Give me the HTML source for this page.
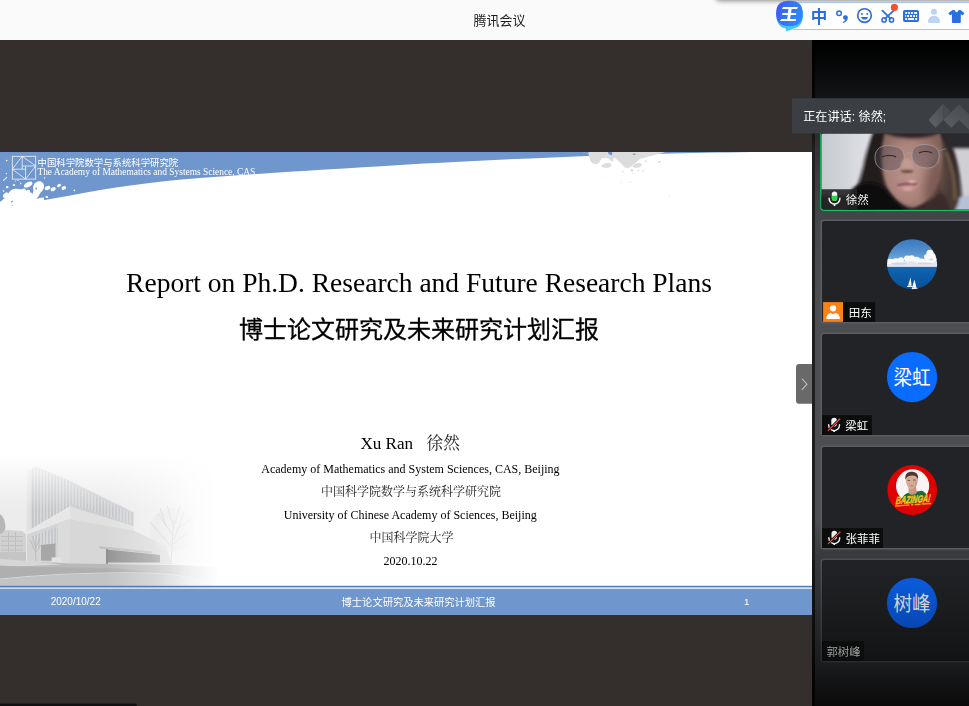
<!DOCTYPE html>
<html lang="zh"><head><meta charset="utf-8"><title>腾讯会议</title>
<style>
html,body{margin:0;padding:0}
html{overflow:hidden;width:969px;height:706px;background:#342f2d}
body{width:969px;height:706px;overflow:hidden;position:relative;background:#342f2d;font-family:"Liberation Sans",sans-serif}
.a{position:absolute}

</style></head><body>

<div class="a" id="titlebar" style="left:0;top:0;width:969px;height:40px;background:#fafafa;overflow:hidden">
  <div class="a" style="left:716px;top:-12px;width:262px;height:12px;border-radius:4px;box-shadow:0 0 5px 1px rgba(0,0,0,.45)"></div>
</div>
<div class="a" id="ime" style="left:790px;top:2px;width:184px;height:26px;background:#fff;border:1px solid #a9c4ef;border-radius:4px;box-sizing:content-box"></div>
<svg class="a" style="left:770px;top:0" width="199" height="40" viewBox="770 0 199 40">
  <defs>
    <linearGradient id="bub" x1="0" y1="0.3" x2="1" y2="0.7"><stop offset="0" stop-color="#3f58f6"/><stop offset=".35" stop-color="#3670f8"/><stop offset="1" stop-color="#2f88fb"/></linearGradient>
  </defs>
  <!-- sogou style bubble -->
  <path d="M776.5 15.3C776.5 6.05 780.72 1.7 789.7 1.7C798.68 1.7 802.9 6.05 802.9 15.3C802.9 24.55 798.68 28.9 789.7 28.9C780.72 28.9 776.5 24.55 776.5 15.3Z" fill="#40c6fb"/>
  <path d="M784.6 26.6 C785.8 28 786.2 29.6 785.9 30.9 C788.6 30.7 791.2 29.9 793.2 28.4Z" fill="#40c6fb"/>
  <path d="M776.1 13.45C776.1 4.76 780.22 0.85 789.4 0.85C798.58 0.85 802.7 4.76 802.7 13.45C802.7 22.14 798.58 26.05 789.4 26.05C780.22 26.05 776.1 22.14 776.1 13.45Z" fill="url(#bub)"/>
  <!-- 王 glyph -->
  <g fill="#fff"><path d="M783.1 7.1 H798 L797 9.05 H781.9Z"/><path d="M782.6 13 H796.1 V14.9 H781.9Z"/><path d="M781.4 19 H796.1 L795.6 20.9 H779.9Z"/><path d="M788.4 8.5 H791.7 L790 19.6 H787.2Z"/></g>
  <!-- punctuation -->
  <circle cx="839.1" cy="13.2" r="2.3" fill="none" stroke="#2a6fe0" stroke-width="1.5"/>
  <path d="M842.9 17.7 a2.45 2.45 0 1 1 4.85 .55 c-.2 2.3 -1.9 4 -4.6 4.7 l-.55 -1 c1.5 -.55 2.4 -1.3 2.65 -2.3 a2.45 2.45 0 0 1 -2.35 -1.95z" fill="#2a6fe0"/>
  <!-- smiley -->
  <circle cx="864.5" cy="15.5" r="6.8" fill="none" stroke="#2a6fe0" stroke-width="1.65"/>
  <circle cx="861.9" cy="14" r="0.95" fill="#2a6fe0"/><circle cx="867.2" cy="14" r="0.95" fill="#2a6fe0"/>
  <path d="M860.9 16.9 h7.3 c-.5 1.7 -1.9 2.6 -3.65 2.6 s-3.15 -.9 -3.65 -2.6z" fill="#2a6fe0"/>
  <!-- scissors -->
  <g fill="none" stroke="#2a6fe0" stroke-linecap="round"><path d="M882.3 10.6 L890.6 18.6 M893.4 10.9 L885 18.6" stroke-width="1.8"/><circle cx="884.1" cy="19.9" r="2.1" stroke-width="1.6"/><circle cx="891.5" cy="19.9" r="2.1" stroke-width="1.6"/></g>
  <circle cx="894.4" cy="7.4" r="3.55" fill="#f4502f"/>
  <!-- keyboard -->
  <rect x="903" y="9.95" width="16.05" height="12.05" rx="1.9" fill="#2a6fe0"/>
  <g fill="#fff"><rect x="905.2" y="12.05" width="1.9" height="1.9"/><rect x="908.1" y="12.05" width="1.85" height="1.9"/><rect x="911" y="12.05" width="1.9" height="1.9"/><rect x="914.1" y="12.05" width="3" height="1.9"/>
  <rect x="905.2" y="15" width="0.95" height="1.95"/><rect x="907.1" y="15" width="1.9" height="1.95"/><rect x="910" y="15" width="1.95" height="1.95"/><rect x="913.1" y="15" width="1.9" height="1.95"/><rect x="916" y="15" width="1.1" height="1.95"/>
  <rect x="905.2" y="18.1" width="1.9" height="1.9"/><rect x="908.1" y="18.1" width="6" height="1.9"/><rect x="915.2" y="18.1" width="1.9" height="1.9"/></g>
  <!-- person (light) -->
  <circle cx="933.95" cy="11.85" r="3.05" fill="#bdd4f5"/><path d="M928 21.9 c0 -3.9 2.6 -5.9 6 -5.9 s6.05 2 6.05 5.9 a1 1 0 0 1 -1 1 h-10.05 a1 1 0 0 1 -1 -1z" fill="#bdd4f5"/>
  <!-- t-shirt -->
  <path d="M952.6 9.95 h2.1 c.3 1.4 1 2.2 1.9 2.2 s1.6 -.8 1.9 -2.2 h2.1 l3.3 2.7 a.7 .7 0 0 1 .1 1 l-1 1.3 a.7 .7 0 0 1 -.9 .15 l-1.3 -.8 v7.6 a1 1 0 0 1 -1 1 h-6.9 a1 1 0 0 1 -1 -1 v-7.6 l-1.3 .8 a.7 .7 0 0 1 -.9 -.15 l-1 -1.3 a.7 .7 0 0 1 .1 -1z" fill="#2a6fe0"/>
</svg>


<div class="a" id="slide" style="left:0;top:152px;width:812px;height:462.8px;background:#fff;overflow:hidden">
<svg class="a" style="left:0;top:0" width="812" height="463" viewBox="0 152 812 463">
  <defs>
    <linearGradient id="fadeR" x1="0" y1="0" x2="1" y2="0"><stop offset="0" stop-color="#fff"/><stop offset=".62" stop-color="#fff"/><stop offset=".8" stop-color="#fff" stop-opacity=".55"/><stop offset="1" stop-color="#fff" stop-opacity="0"/></linearGradient>
    <linearGradient id="fadeT" x1="0" y1="0" x2="0" y2="1"><stop offset="0" stop-color="#000"/><stop offset=".22" stop-color="#222"/><stop offset=".5" stop-color="#bbb"/><stop offset=".75" stop-color="#fff"/><stop offset="1" stop-color="#fff"/></linearGradient>
    <radialGradient id="fadeRad" gradientUnits="userSpaceOnUse" cx="0" cy="0" r="1" gradientTransform="translate(30 600) scale(215 150)"><stop offset="0" stop-color="#fff"/><stop offset=".5" stop-color="#fff"/><stop offset=".68" stop-color="#aaa"/><stop offset=".85" stop-color="#333"/><stop offset="1" stop-color="#000"/></radialGradient>
    <mask id="photoMask" maskUnits="userSpaceOnUse" x="0" y="440" width="260" height="150">
      <rect x="0" y="440" width="260" height="150" fill="url(#fadeRad)"/>
    </mask>
    <linearGradient id="fadeTop" x1="0" y1="0" x2="0" y2="1"><stop offset="0" stop-color="#fff"/><stop offset=".2" stop-color="#fff"/><stop offset=".5" stop-color="#fff" stop-opacity=".6"/><stop offset="1" stop-color="#fff" stop-opacity="0"/></linearGradient>
    <linearGradient id="fadeRight" x1="0" y1="0" x2="1" y2="0"><stop offset="0" stop-color="#fff" stop-opacity="0"/><stop offset=".3" stop-color="#fff" stop-opacity=".35"/><stop offset=".52" stop-color="#fff" stop-opacity=".8"/><stop offset=".69" stop-color="#fff"/><stop offset="1" stop-color="#fff"/></linearGradient>
    <filter id="b1" x="-5%" y="-5%" width="110%" height="110%"><feGaussianBlur stdDeviation="0.7"/></filter>
    <filter id="b3" x="-20%" y="-20%" width="140%" height="140%"><feGaussianBlur stdDeviation="2.5"/></filter>
    <pattern id="stripes" width="3.2" height="10" patternUnits="userSpaceOnUse"><rect width="3.2" height="10" fill="#d6d7d9"/><rect width="1.5" height="10" fill="#bfc1c4"/></pattern>
  </defs>

  <!-- building photo (greyscale, fading out) -->
  <g filter="url(#b1)">
    <rect x="0" y="440" width="260" height="150" fill="#ebebeb"/>
    <!-- distant left buildings + tree -->
    <path d="M0 531 L8 530 L22 531 L26 534 V560 H0Z" fill="#d0d0d0"/>
    <g fill="#bdbdbd"><rect x="1" y="536" width="22" height="1.1"/><rect x="1" y="540.5" width="22" height="1.1"/><rect x="1" y="545" width="22" height="1.1"/><rect x="1" y="549.5" width="22" height="1.1"/><rect x="8" y="532" width="1" height="24"/><rect x="15" y="532" width="1" height="24"/></g>
    <path d="M0 514 C3 516 5 520 5.4 526 C5.6 530 4 533 0 534Z" fill="#b4b4b4"/>
    <path d="M0 552 H26 V561 H0Z" fill="#c2c2c2"/>
    <!-- upper glass volume: left face, right face -->
    <path d="M28.4 470 L36.4 466.4 L69.8 480.8 L69.8 506.6 L26.8 531.5Z" fill="url(#stripes)"/>
    <path d="M26.8 470 L30.6 468.6 L30.6 529.4 L26.8 531.5Z" fill="#e0e0e1"/>
    <path d="M69.8 480.8 L133.9 512.4 L133.9 526.7 L69.8 506.6Z" fill="#cbccce"/>
    <path d="M69.8 484 L133.9 514.4 L133.9 525 L69.8 503Z" fill="url(#stripes)" opacity=".9"/>
    <!-- white band under glass -->
    <path d="M26.8 531.5 L69.8 506.6 L69.8 519 L26.8 534.6Z" fill="#e6e6e6"/>
    <path d="M69.8 506.6 L133.9 526.7 L133.9 530.5 L69.8 519Z" fill="#dfdfdf"/>
    <!-- lower volume right face -->
    <path d="M69.8 519 L133.9 530.5 L166 546 L172 564 L69.8 564Z" fill="#d5d5d5"/>
    <!-- lower left face with windows -->
    <path d="M26.8 534.6 L69.8 519 L69.8 564 L26.8 561Z" fill="#d2d2d2"/>
    <path d="M32.5 536 L58 526.6 L58 545 L32.5 549Z" fill="url(#stripes)"/>
    <path d="M41 545 L55.5 543.6 L55.5 561 L41 560.4Z" fill="#a3a3a3"/>
    <path d="M58 523 L69.8 519 L69.8 564 L58 563.4Z" fill="#dadada"/>
    <!-- small tree near corner -->
    <g stroke="#b2b2b2" stroke-width="0.7" fill="none"><path d="M36 561 L35 545 M35 551 L30 540 M35.4 549 L40 538 M35 546 L33 536 M35.2 553 L41 545"/></g>
    <!-- entrance canopy + dark doorway -->
    <path d="M99.4 546.2 L152 551.6 L152 553.4 L99.4 548.4Z" fill="#bcbcbc"/>
    <path d="M106 549.6 L142 553 L160 555 L160 562.6 L106 562.6Z" fill="#8e8e8e"/>
    <rect x="106.2" y="549" width="1.7" height="26" fill="#888"/>
    <rect x="51.6" y="557.4" width="9.6" height="4.4" fill="#e2e2e2"/>
    <!-- ground / road -->
    <path d="M0 560 L70 563.4 L180 565 L260 570 L260 590 L0 590Z" fill="#b6b6b6"/>
    <path d="M0 559 L30 561 L62 564.4 L20 566.6 L0 565.4Z" fill="#d4d4d4"/>
    <path d="M0 566 L120 568.6 L200 578 L200 590 L0 590Z" fill="#ababab"/>
    <path d="M0 579.6 C50 574.6 100 572.6 150 573.6 C170 574.4 190 578 205 582 L205 590 L0 590Z" fill="#c0c0c0"/>
    <path d="M0 579 C50 574 100 572 150 573 C170 573.8 190 577 205 581" stroke="#d6d6d6" stroke-width="1.2" fill="none"/>
    <!-- tree on right -->
    <ellipse cx="172" cy="530" rx="22" ry="22" fill="#dcdcdc" opacity=".55"/>
    <g stroke="#bfbfbf" stroke-width="0.8" fill="none"><path d="M171 562 L174 520 M174 540 L184 512 M173.4 536 L158 514 M174 528 L167 506 M176 530 L191 519 M172.6 548 L150 522 M175 524 L180 505 M173 544 L188 532 M166 526 L160 508"/></g>
  </g>
  <!-- fade-outs -->
  <rect x="0" y="440" width="270" height="70" fill="url(#fadeTop)"/>
  <rect x="105" y="440" width="165" height="150" fill="url(#fadeRight)"/>
  <rect x="0" y="440" width="270" height="150" fill="#fff" opacity=".05"/>

  <!-- header blue band with curved lower edge -->
  <path d="M0 152 H812 V152 H766 C700 152.6 640 154 600 155.4 C520 158.6 450 162 400 165 C330 169.2 260 173.6 200 178 C150 182 110 188 78 194 C50 199.5 25 203.5 0 207Z" fill="#7097cd"/>
  <!-- grey splatter (top middle) -->
  <g fill="#dcdcdc">
    <path d="M583 152 H665.4 C657 154.4 648 156.6 640 159 C637 161.4 634 164.6 630.4 167 C627.6 168.8 624.6 168 623 165.6 C620.6 162.6 618 160.4 615.4 158.4 C613.6 157 612.6 159 613.6 161 C612 162 610.4 160.8 609.4 159 C607 157.6 604 157.6 601.6 158.6 C600.4 160.6 599.4 163.4 596.4 164.2 C593 164.8 590.6 162.6 589.8 159.6 C589 157 588.8 155 588.6 153.4 C587 153.6 584.6 153 583 152Z"/>
    <path d="M601.6 165.6 C602.6 163.6 606 162.8 608.6 163 C610.8 163.2 611.8 164.6 611.2 166 C610.4 167.6 607.6 168 605 167.8 C603 167.8 601.2 167 601.6 165.6Z"/>
    <path d="M632.4 166.6 C633.6 164 637.6 162.8 640.4 163.2 C642.6 163.6 642.2 165.6 640.2 166.8 C638 168.2 634.6 168.6 632.4 166.6Z"/>
    <ellipse cx="645.8" cy="161.2" rx="1.4" ry="0.6"/><ellipse cx="659.4" cy="162" rx="1.5" ry="1"/>
    <ellipse cx="632" cy="170.4" rx="1.3" ry="1.3"/><ellipse cx="638.4" cy="170.4" rx="1" ry="0.7"/><ellipse cx="643" cy="171" rx="0.7" ry="0.7"/><ellipse cx="623" cy="171.6" rx="1" ry="0.7"/><ellipse cx="633" cy="173.2" rx="1.6" ry="0.4"/>
    <ellipse cx="603" cy="176" rx="1" ry="0.6" opacity=".5"/><ellipse cx="621" cy="182.6" rx="1" ry="0.6" opacity=".5"/><ellipse cx="630" cy="182" rx="3" ry="0.4" opacity=".4" transform="rotate(-15 630 182)"/><ellipse cx="669.6" cy="196" rx="1.2" ry="0.6" opacity=".6"/><ellipse cx="584" cy="164.6" rx="0.8" ry="0.6" opacity=".4"/>
  </g>
  <g fill="#7097cd"><path d="M607.8 152 H612.2 V155 C610.6 155.6 608.6 154.6 607.8 152Z"/><ellipse cx="634.2" cy="154.2" rx="1.6" ry="0.6"/><path d="M583 152 H589 C588 153.6 585.4 153.4 583 152Z"/></g>
  <!-- white splatter (top left) -->
  <g fill="#fff">
    <path d="M0 202 C3 200 6 197 8.5 193 C10 190.4 12.5 189 15 188.8 C17.5 188.4 19.5 189.6 21.5 189.2 C23.5 188.6 25.4 189.6 26.6 190.8 C28 192 29.6 192 31 192.6 C32.4 193.4 33 195 33.6 196.4 C34.4 198 36 199 38 198.6 C40 198.2 42 197.6 44 197.6 L44 201 L0 208Z"/>
    <path d="M33.4 190 C32.4 186 34.2 182.4 37.8 181.4 C41.6 180.6 44.4 183.4 44 187 C43.6 190 41.8 191.4 40.4 192.8 C39.2 194.8 38.2 197.6 36 199.4 C33 199 31.6 196 32.6 193.4 C33.2 192.2 33.6 191 33.4 190Z"/>
    <ellipse cx="28.2" cy="184.6" rx="4.6" ry="2.3" transform="rotate(-28 28.2 184.6)"/>
    <ellipse cx="28.4" cy="191" rx="1.8" ry="1.2" transform="rotate(20 28.4 191)"/>
    <ellipse cx="24" cy="189.6" rx="1.5" ry="1"/>
    <ellipse cx="47.5" cy="188" rx="2.9" ry="2" transform="rotate(-22 47.5 188)"/>
    <ellipse cx="53.2" cy="189.2" rx="2.7" ry="1.8" transform="rotate(-28 53.2 189.2)"/>
    <ellipse cx="59" cy="185.5" rx="2.1" ry="1.4" transform="rotate(-28 59 185.5)"/>
    <ellipse cx="63.8" cy="187.9" rx="2.4" ry="1.8" transform="rotate(-25 63.8 187.9)"/>
    <ellipse cx="5.4" cy="195" rx="3.2" ry="1.7" transform="rotate(-48 5.4 195)"/>
    <ellipse cx="7.2" cy="187.2" rx="1.3" ry="1.1"/>
    <ellipse cx="3.6" cy="191" rx="0.9" ry="0.8"/>
    <ellipse cx="14" cy="185" rx="1.2" ry="1"/>
    <ellipse cx="20.6" cy="183.4" rx="0.7" ry="0.9"/>
    <ellipse cx="46.8" cy="197" rx="1.4" ry="1"/>
    <circle cx="6.4" cy="173.6" r="0.7"/><circle cx="6.7" cy="160.5" r="0.8"/><circle cx="44.6" cy="178" r="0.7"/><circle cx="74.4" cy="190.4" r="0.8"/><circle cx="18" cy="180.4" r="0.6"/><circle cx="15.4" cy="181" r="0.5"/>
    <path d="M2.8 180.4 L6.8 176.8 L7.4 177.5 L3.4 181Z"/>
  </g>
  <g fill="#7097cd"><ellipse cx="12" cy="201.6" rx="1.2" ry="0.7" transform="rotate(-35 12 201.6)"/><ellipse cx="12.4" cy="205.2" rx="0.9" ry="0.4"/><ellipse cx="36.2" cy="188.4" rx="0.7" ry="1.2"/></g>
  <!-- logo: outer square + chord diagram -->
  <g fill="none" stroke="#fff" stroke-width="0.75" opacity=".95">
    <rect x="12.3" y="156.3" width="23.4" height="22.8"/>
    <path d="M22.2 156.3 L35.7 166 L25.6 179.1 L12.3 169.2Z"/>
    <path d="M22.2 156.3 V169.2 M12.3 169.2 H25.6 M25.6 179.1 V166 M35.7 166 H22.2"/>
  </g>

  <!-- footer -->
  <rect x="0" y="585.8" width="812" height="1.8" fill="#477dbd"/>
  <rect x="0" y="587.6" width="812" height="1.2" fill="#eef1f6"/>
  <rect x="0" y="588.8" width="812" height="27" fill="#7097cd"/>
</svg>
</div>
<svg class="a" style="left:0;top:0;will-change:transform" width="812" height="706" viewBox="0 0 812 706">
 <defs><clipPath id="hdrclip"><path d="M0 152 H812 V152 H766 C700 152.6 640 154 600 155.4 C520 158.6 450 162 400 165 C330 169.2 260 173.6 200 178 C150 182 110 188 78 194 C50 199.5 25 203.5 0 207Z"/></clipPath></defs>
 <g font-family="Liberation Serif, serif" fill="#000">
  <text x="37.4" y="175" font-size="9.42" fill="#fff" textLength="217.9" lengthAdjust="spacingAndGlyphs" clip-path="url(#hdrclip)">The Academy of Mathematics and Systems Science, CAS</text>
  <text x="126.1" y="292.3" font-size="27.5" textLength="585.8" lengthAdjust="spacingAndGlyphs">Report on Ph.D. Research and Future Research Plans</text>
  <text x="360.4" y="448.8" font-size="17.1" textLength="52.7" lengthAdjust="spacingAndGlyphs">Xu Ran</text>
  <text x="261.3" y="473.2" font-size="12" textLength="298.3" lengthAdjust="spacingAndGlyphs">Academy of Mathematics and System Sciences, CAS, Beijing</text>
  <text x="283.8" y="519" font-size="12" textLength="252.95" lengthAdjust="spacingAndGlyphs">University of Chinese Academy of Sciences, Beijing</text>
  <text x="383.4" y="565" font-size="12" textLength="54" lengthAdjust="spacingAndGlyphs">2020.10.22</text>
 </g>
 <g font-family="Liberation Sans, sans-serif" fill="#fff">
  <text x="50.7" y="605.2" font-size="10" textLength="50.06" lengthAdjust="spacingAndGlyphs">2020/10/22</text>
  <text x="743.9" y="604.9" font-size="9.8">1</text>
 </g>
</svg>


<svg class="a" style="left:0;top:0" width="969" height="706" viewBox="0 0 969 706">
 <defs>
  <linearGradient id="sbg" gradientUnits="userSpaceOnUse" x1="0" y1="40" x2="0" y2="706">
   <stop offset="0" stop-color="#000"/><stop offset=".03" stop-color="#050606"/><stop offset=".087" stop-color="#121416"/>
   <stop offset=".15" stop-color="#2d2f32"/><stop offset=".2" stop-color="#393b3e"/><stop offset=".27" stop-color="#44464a"/><stop offset=".42" stop-color="#4c4e52"/><stop offset=".72" stop-color="#4c4e52"/><stop offset=".769" stop-color="#3a3b3e"/><stop offset=".871" stop-color="#28292b"/><stop offset=".938" stop-color="#1a1b1c"/><stop offset="1" stop-color="#0b0b0c"/>
  </linearGradient>
  <linearGradient id="stripfade" x1="0" y1="0" x2="0" y2="1"><stop offset="0" stop-color="#000"/><stop offset=".5" stop-color="#000" stop-opacity=".85"/><stop offset="1" stop-color="#000" stop-opacity="0"/></linearGradient>
  <linearGradient id="sfade" gradientUnits="userSpaceOnUse" x1="0" y1="520" x2="0" y2="706">
   <stop offset="0" stop-color="#000" stop-opacity="0"/><stop offset=".27" stop-color="#000" stop-opacity=".32"/><stop offset=".6" stop-color="#000" stop-opacity=".6"/><stop offset=".8" stop-color="#000" stop-opacity=".82"/><stop offset="1" stop-color="#000" stop-opacity=".92"/>
  </linearGradient>
  <linearGradient id="av5" x1="0" y1="0" x2="0" y2="1"><stop offset="0" stop-color="#0a5cdc"/><stop offset="1" stop-color="#0846b2"/></linearGradient>
  <linearGradient id="t5b" x1="0" y1="0" x2="0" y2="1"><stop offset="0" stop-color="#222326"/><stop offset=".5" stop-color="#1b1c1e"/><stop offset="1" stop-color="#121314"/></linearGradient>
  <linearGradient id="t5s" x1="0" y1="0" x2="0" y2="1"><stop offset="0" stop-color="#4c4e52"/><stop offset="1" stop-color="#2a2b2d"/></linearGradient>
  <clipPath id="vclip"><rect x="821.5" y="133.5" width="160" height="76.10" rx="2"/></clipPath>
  <linearGradient id="lgA" x1="1" y1="0" x2="0" y2="1"><stop offset="0" stop-color="#4b4e52"/><stop offset="1" stop-color="#5f6266"/></linearGradient><linearGradient id="lgB" x1="1" y1="0" x2="0" y2="1"><stop offset="0" stop-color="#45484c"/><stop offset=".5" stop-color="#505357"/><stop offset="1" stop-color="#606367"/></linearGradient>
 </defs>
 <rect x="812" y="40" width="157" height="666" fill="url(#sbg)"/>
 <rect x="812" y="40" width="3" height="666" fill="#1e1f21"/><rect x="812" y="560" width="3" height="146" fill="url(#sfade)"/>
 <rect x="812" y="40" width="3" height="110" fill="url(#stripfade)"/>

 <!-- video tile: green frame -->
 <rect x="820.85" y="107.05" width="170" height="103.20" rx="3" fill="#1b1b1d" stroke="#14c262" stroke-width="1.3"/>
 <g clip-path="url(#vclip)">
  <svg x="822" y="133.8" width="147" height="75" viewBox="0 0 147 75" overflow="visible">
  <defs>
   <filter id="vb2" x="-30%" y="-30%" width="160%" height="160%"><feGaussianBlur stdDeviation="1.8"/></filter>
   <filter id="vb1" x="-30%" y="-30%" width="160%" height="160%"><feGaussianBlur stdDeviation="0.8"/></filter>
   <filter id="vb4" x="-60%" y="-40%" width="220%" height="180%"><feGaussianBlur stdDeviation="4.5"/></filter>
   <filter id="vb05" x="-30%" y="-30%" width="160%" height="160%"><feGaussianBlur stdDeviation="0.45"/></filter>
   <linearGradient id="wall" x1="0" y1="0" x2="1" y2="0"><stop offset="0" stop-color="#c3c6cc"/><stop offset="1" stop-color="#e2e3e8"/></linearGradient>
   <radialGradient id="faceg" cx=".45" cy=".55" r=".6"><stop offset="0" stop-color="#bd958c"/><stop offset=".6" stop-color="#a98279"/><stop offset="1" stop-color="#84635b"/></radialGradient>
  </defs>
  <rect x="-5" y="-5" width="160" height="90" fill="#2b2122"/>
  <g filter="url(#vb2)">
   <!-- wall left -->
   <path d="M-6 -6 H52 C46 10 43 22 41 32 C38 44 36 52 30 62 L-6 62Z" fill="url(#wall)"/>
   <!-- right light bg -->
   <path d="M131 14 H155 V64 H140 C139 45 136 28 131 14Z" fill="#cfcfd4"/>
   <!-- right top dark object -->
   <path d="M120 -6 H155 V15 H126Z" fill="#2a2a2d"/>
   <!-- bottom right fabric -->
   <path d="M134 66 C140 60 148 61 155 64 V82 H130Z" fill="#b6c0d6"/>
   <!-- lighter brown hair strands on right -->
   <path d="M112 -6 C124 8 134 30 138 58 C138 68 134 76 130 82 H112 C120 60 122 30 112 -6Z" fill="#4a3a34"/>
   <path d="M124 18 C130 32 133 48 133 66" stroke="#75614f" stroke-width="2.2" fill="none"/>
   <!-- left hair mass -->
   <path d="M52 -6 H70 C62 6 58 22 58 38 C58 48 60 56 62 62 L52 80 H28 C38 60 40 40 44 24 C46 12 48 4 52 -6Z" fill="#231a1b"/>
  </g>
  <!-- face -->
  <g filter="url(#vb2)">
   <path d="M64 -6 C58 12 58 36 64 52 C70 64 80 73 90 74 C102 73 112 62 118 46 C122 30 122 8 116 -6Z" fill="url(#faceg)"/>
   <ellipse cx="112" cy="48" rx="9" ry="22" fill="#76564f" fill-opacity=".85" transform="rotate(12 112 48)" filter="url(#vb4)"/>
   <path d="M56 -6 H122 C118 1 108 5 92 5 C78 5 64 3 56 -6Z" fill="#33272a"/>
  </g>
  <!-- black clothes bottom -->
  <g filter="url(#vb2)">
   <path d="M30 55 C40 47 54 47 62 54 C68 60 74 70 86 77 V90 H20Z" fill="#0f0d0e"/>
   <path d="M96 74 C104 72 112 66 118 58 C124 62 128 70 130 82 H96Z" fill="#3a2c29"/>
  </g>
  <!-- glasses -->
  <g fill="#4d4450" fill-opacity=".38" stroke="#a8a5ac" stroke-width="0.7" filter="url(#vb05)">
   <path d="M53 24 C53 14 60 11 69 12 C79 13 83 17 82 26 C81 34 74 38 66 37 C58 36 53 32 53 24Z"/>
   <path d="M90 21 C90 12 98 10 106 11 C114 12 118 16 117 24 C116 32 110 35 103 34 C95 33 90 29 90 21Z"/>
  </g>
  <path d="M82 22 C84 19 88 18 90 20" stroke="#a8a5ac" stroke-width="0.7" fill="none"/>
  <path d="M117 17 L124 15" stroke="#8f8c93" stroke-width="0.7"/>
  <!-- eyes hints -->
  <g filter="url(#vb05)"><path d="M60 23 q7 -3 14 0" stroke="#3a2a2a" stroke-width="1.3" fill="none"/><path d="M97 19 q7 -3 13 0" stroke="#3a2a2a" stroke-width="1.3" fill="none"/></g>
  <!-- nose / lips -->
  <g filter="url(#vb1)">
   <ellipse cx="85" cy="31" rx="6" ry="6" fill="#c29a90"/>
   <ellipse cx="85" cy="37.4" rx="6.4" ry="1.8" fill="#6d4e49"/>
   <path d="M73 52 C78 47 92 46 97 50 C95 58 80 60 73 52Z" fill="#c68e8d"/>
   <path d="M75 51.6 C81 50 90 49.6 95 50.4" stroke="#4d2b2e" stroke-width="1.6" fill="none"/>
   <ellipse cx="90" cy="48" rx="3.4" ry="1.2" fill="#e6beba"/>
   <ellipse cx="86" cy="55" rx="5" ry="1.6" fill="#d9a7a5"/>
  </g>
  <!-- label shade -->
  <path d="M-1 55.4 H35 V76 H-1Z" fill="#232426" fill-opacity=".9"/>
 </svg>
 </g>
 <!-- active mic -->
 <g transform="translate(827.4 191.2)">
  <rect x="4.4" y="0.4" width="5.4" height="9.4" rx="2.7" fill="#f2f2f2"/>
  <path d="M4.4 4.6 h5.4 v2.5 a2.7 2.7 0 0 1 -5.4 0z" fill="#2fd24b"/>
  <path d="M1.7 7 v.4 a5.4 5.4 0 0 0 10.8 0 v-.4" fill="none" stroke="#f2f2f2" stroke-width="1.5" stroke-linecap="round"/>
  <path d="M7.1 12.8 V14.8" stroke="#f2f2f2" stroke-width="1.8"/>
 </g>
 <!-- speaking banner -->
 <rect x="792" y="98.2" width="180" height="35.3" fill="#3b3e43"/>
 <g>
  <path d="M929.7 118.5 L943 103.9 L943.4 119.8 L935.6 127.8 L929.5 121.2 Q928.5 119.8 929.7 118.5Z" fill="url(#lgA)"/>
  <path d="M943 103.9 L950.8 111.5 L943.4 119.8Z" fill="#484b4f"/>
  <path d="M943.4 119.8 L959 104.5 L976 121 L976 136 L959 120 L951.3 127.8Z" fill="url(#lgB)"/>
 </g>

 <!-- tile 2 -->
 <rect x="821.1999999999999" y="220.20" width="170" height="102.60" rx="2.8" fill="#222326" stroke="#5a5d61" stroke-width="1.6"/>
 <svg x="886" y="237.5" width="52" height="52" viewBox="886 237.5 52 52">
  <defs><clipPath id="c2"><circle cx="912.1" cy="264.2" r="25"/></clipPath>
  <linearGradient id="sky" x1="0" y1="0" x2="0" y2="1"><stop offset="0" stop-color="#3a78bd"/><stop offset=".4" stop-color="#4d8bcc"/><stop offset=".8" stop-color="#74a8dc"/><stop offset="1" stop-color="#9cc0e4"/></linearGradient>
  <linearGradient id="sea" x1="0" y1="0" x2="0" y2="1"><stop offset="0" stop-color="#1467b2"/><stop offset=".25" stop-color="#0c5fab"/><stop offset="1" stop-color="#0a4f97"/></linearGradient>
  <filter id="cb" x="-20%" y="-40%" width="140%" height="180%"><feGaussianBlur stdDeviation="0.6"/></filter></defs>
  <g clip-path="url(#c2)">
   <rect x="886" y="238" width="52" height="29" fill="url(#sky)"/>
   <rect x="886" y="266.7" width="52" height="24" fill="url(#sea)"/>
   <g filter="url(#cb)">
    <rect x="886" y="261" width="52" height="5.8" fill="#e3e6ef"/>
    <g fill="#fbf8f9">
     <ellipse cx="890" cy="261.4" rx="4.6" ry="2.6"/><ellipse cx="896" cy="260.6" rx="3.6" ry="2.4"/><ellipse cx="901" cy="259.8" rx="3" ry="2.6"/>
     <ellipse cx="907.4" cy="258.6" rx="3.4" ry="3"/><ellipse cx="911.6" cy="258.2" rx="3.2" ry="3"/><ellipse cx="916.4" cy="259.6" rx="3.6" ry="2.8"/><ellipse cx="921.4" cy="260.6" rx="3.4" ry="2.2"/>
     <ellipse cx="930" cy="253.4" rx="3.6" ry="3.6"/><ellipse cx="927.4" cy="257" rx="3.4" ry="3"/><ellipse cx="933.6" cy="257.6" rx="3.8" ry="4"/><ellipse cx="929" cy="261" rx="6" ry="2.6"/>
    </g>
    <g fill="#c9d3e6" opacity=".8"><ellipse cx="899" cy="263.6" rx="8" ry="1.1"/><ellipse cx="925" cy="263.4" rx="7" ry="1"/><ellipse cx="931" cy="259.4" rx="2.4" ry="1"/></g>
   </g>
   <path d="M908 285.8 L910.6 277.2 L911.6 285.8Z M912 287.8 L914.4 279.4 L916.6 288Z M906.8 286 h5.6 l-.5 1.1 h-4.6z M911.6 288 h6.2 l-.6 1.4 h-5z" fill="#f4f7fa"/>
  </g>
 
</svg>
 <rect x="823.1" y="302.10" width="19.9" height="19.8" fill="#fa8219"/>
 <g transform="translate(823.1 302.10)"><circle cx="10" cy="6.2" r="3.1" fill="#fff"/><path d="M3.2 17 c0 -3.6 2.2 -6 4.6 -6.4 c.8 1 1.4 1.4 2.2 1.4 s1.4 -.4 2.2 -1.4 c2.4 .4 4.6 2.8 4.6 6.4z" fill="#fff"/></g>
 <rect x="843" y="302.20" width="32.2" height="19.8" fill="#0b0c0c"/>

 <!-- tile 3 -->
 <rect x="821.1999999999999" y="333.20" width="170" height="102.60" rx="2.8" fill="#222326" stroke="#5a5d61" stroke-width="1.6"/>
 <circle cx="912.05" cy="377.05" r="25.1" fill="#0a6cfe"/>
 <rect x="822.0" y="415.20" width="49.8" height="19.8" fill="#0b0c0c"/>
 <g transform="translate(826.4 417.60)">
<rect x="4.9" y="0.2" width="5.6" height="8.8" rx="2.8" fill="#f0f0f0"/>
<path d="M2.3 7.2 v.5 a5.4 5.4 0 0 0 10.8 0 v-.5" fill="none" stroke="#f0f0f0" stroke-width="1.4" stroke-linecap="round"/>
<path d="M7.7 13 V14.4" stroke="#f0f0f0" stroke-width="1.6"/>
<path d="M2.2 12.6 L13 1.8" stroke="#0b0c0c" stroke-width="2.6"/>
<path d="M1.8 13 L13.4 1.4" stroke="#ee4a42" stroke-width="1.3" stroke-linecap="round"/>
</g>

 <!-- tile 4 -->
 <rect x="821.1999999999999" y="446.20" width="170" height="102.60" rx="2.8" fill="#222326" stroke="#5a5d61" stroke-width="1.6"/>
 <svg x="886" y="463.5" width="52" height="52" viewBox="886 463.5 52 52">
  <defs><clipPath id="c4"><circle cx="912.6" cy="485.9" r="16.6"/></clipPath><clipPath id="c4o"><circle cx="912.2" cy="490" r="24.9"/></clipPath>
  <filter id="a4b" x="-20%" y="-20%" width="140%" height="140%"><feGaussianBlur stdDeviation="0.45"/></filter></defs>
  <circle cx="912.2" cy="490" r="24.9" fill="#de0100"/>
  <circle cx="912.6" cy="485.9" r="16.6" fill="#fbf4f4"/>
  <g clip-path="url(#c4)" filter="url(#a4b)">
   <path d="M900 504 C901.4 497.6 904.6 493.6 908.4 492.8 L921.6 490.8 C925.4 491.6 927.6 495 929 504Z" fill="#1f6c39"/>
   <path d="M908.6 487 L915.6 485.6 L917 492.4 C914.6 495 911 495.4 908.8 493.4Z" fill="#c89782"/>
   <path d="M905.8 480.6 C905.4 475.6 908 472.6 912 472.4 C916 472.2 918.4 475.4 917.8 480.6 C917.4 485.4 915 489.2 911.8 489.4 C908.6 489.2 906.2 485.2 905.8 480.6Z" fill="#d7aa95"/>
   <path d="M905.6 479.4 C904.6 474.4 907.4 471.8 911.6 471.8 C915.8 471.8 918.8 474 918 479 C916.8 476.4 914.6 475.4 912 475.6 C909.2 475.6 906.8 476.6 905.6 479.4Z" fill="#4a372e"/>
   <path d="M907.6 480.4 h2.6 M913 480 h2.6" stroke="#5a4036" stroke-width="0.8"/>
   <path d="M910 485.8 h3.4" stroke="#a36b5c" stroke-width="0.7"/>
   <path d="M915.4 480 C916.6 483 916 486.6 913.4 489" stroke="#b98872" stroke-width="1.2" fill="none" opacity=".6"/>
  </g>
  <g clip-path="url(#c4o)">
   <text x="895.6" y="504.2" font-family="Liberation Sans, sans-serif" font-weight="bold" font-style="italic" font-size="10.4" fill="#f6c51c" stroke="#f6c51c" stroke-width="0.45" paint-order="stroke" textLength="34.6" lengthAdjust="spacingAndGlyphs" transform="rotate(-4.1 896 504) translate(896 504) skewX(-10) translate(-896 -504)">BAZINGA!</text>
   <g transform="rotate(-4.1 896 504)" fill="#efb61e" opacity=".9"><rect x="895" y="505.2" width="14.4" height="1.5"/><rect x="911" y="505.2" width="2.2" height="1.5"/><rect x="914.6" y="505.2" width="6" height="1.5"/><rect x="921.6" y="505.2" width="9.6" height="1.5"/></g>
  </g>
 
</svg>
 <rect x="822.0" y="528.20" width="60.9" height="19.8" fill="#0b0c0c"/>
 <g transform="translate(826.6 530.60)">
<rect x="4.9" y="0.2" width="5.6" height="8.8" rx="2.8" fill="#f0f0f0"/>
<path d="M2.3 7.2 v.5 a5.4 5.4 0 0 0 10.8 0 v-.5" fill="none" stroke="#f0f0f0" stroke-width="1.4" stroke-linecap="round"/>
<path d="M7.7 13 V14.4" stroke="#f0f0f0" stroke-width="1.6"/>
<path d="M2.2 12.6 L13 1.8" stroke="#0b0c0c" stroke-width="2.6"/>
<path d="M1.8 13 L13.4 1.4" stroke="#ee4a42" stroke-width="1.3" stroke-linecap="round"/>
</g>

 <!-- tile 5 -->
 <rect x="821.1999999999999" y="559.20" width="170" height="102.60" rx="2.8" fill="url(#t5b)" stroke="url(#t5s)" stroke-width="1.6"/>
 <circle cx="912" cy="603" r="25.1" fill="url(#av5)"/>
 <rect x="822.0" y="641.20" width="42" height="19.8" fill="#0b0c0c"/>

 <!-- bottom darkening -->
 <!-- collapse handle -->
 <path d="M812 364 H799.4 a3.4 3.4 0 0 0 -3.4 3.4 V400.4 a3.4 3.4 0 0 0 3.4 3.4 H812Z" fill="#696969"/>
 <path d="M801.8 378.6 L807 384.2 L801.8 389.8" fill="none" stroke="#b9b9b9" stroke-width="1.2"/>
 <rect x="0" y="703.5" width="136.6" height="3" fill="#111"/>
</svg>

<svg class="a" style="left:0;top:0" width="969" height="706" viewBox="0 0 969 706">
<g font-family="'Liberation Sans', 'Noto Sans CJK SC', sans-serif">
<text x="37.5" y="165.7" font-size="9.4" fill="#fff">中国科学院数学与系统科学研究院</text>
<text x="239" y="337.6" font-size="24" fill="#000" stroke="#000" stroke-width="0.3">博士论文研究及未来研究计划汇报</text>
<text x="341.6" y="606.3" font-size="10.27" fill="#fff">博士论文研究及未来研究计划汇报</text>
<text x="803.2" y="120.6" font-size="12.15" fill="#fff">正在讲话: 徐然;</text>
<text x="845.7" y="204.4" font-size="11.5" fill="#f4f4f4">徐然</text>
<text x="848.8" y="316.9" font-size="11.5" fill="#fff">田东</text>
<text transform="translate(893.6 385.4) scale(1 1.08)" x="0" y="0" font-size="18.5" fill="#fff">梁虹</text>
<text x="845.3" y="430.2" font-size="11.4" fill="#fff">梁虹</text>
<text x="845.6" y="543" font-size="11.4" fill="#fff">张菲菲</text>
<text transform="translate(893.6 611.4) scale(1 1.08)" x="0" y="0" font-size="18.5" fill="#d4d3d2">树峰</text>
<text x="826.4" y="656.4" font-size="11.4" fill="#9d9d9d">郭树峰</text>
<text x="473.6" y="24.6" font-size="13" fill="#1c1c1c">腾讯会议</text>
<text x="810.8" y="22.9" font-size="16.6" font-weight="bold" fill="#2a6fe0">中</text>
</g>
<g font-family="'Liberation Serif', 'Noto Serif CJK SC', serif" fill="#222">
<text x="426.6" y="449.2" font-size="16.6">徐然</text>
<text x="321" y="496.3" font-size="12">中国科学院数学与系统科学研究院</text>
<text x="369.4" y="542" font-size="12">中国科学院大学</text>
</g>
</svg>
</body></html>
